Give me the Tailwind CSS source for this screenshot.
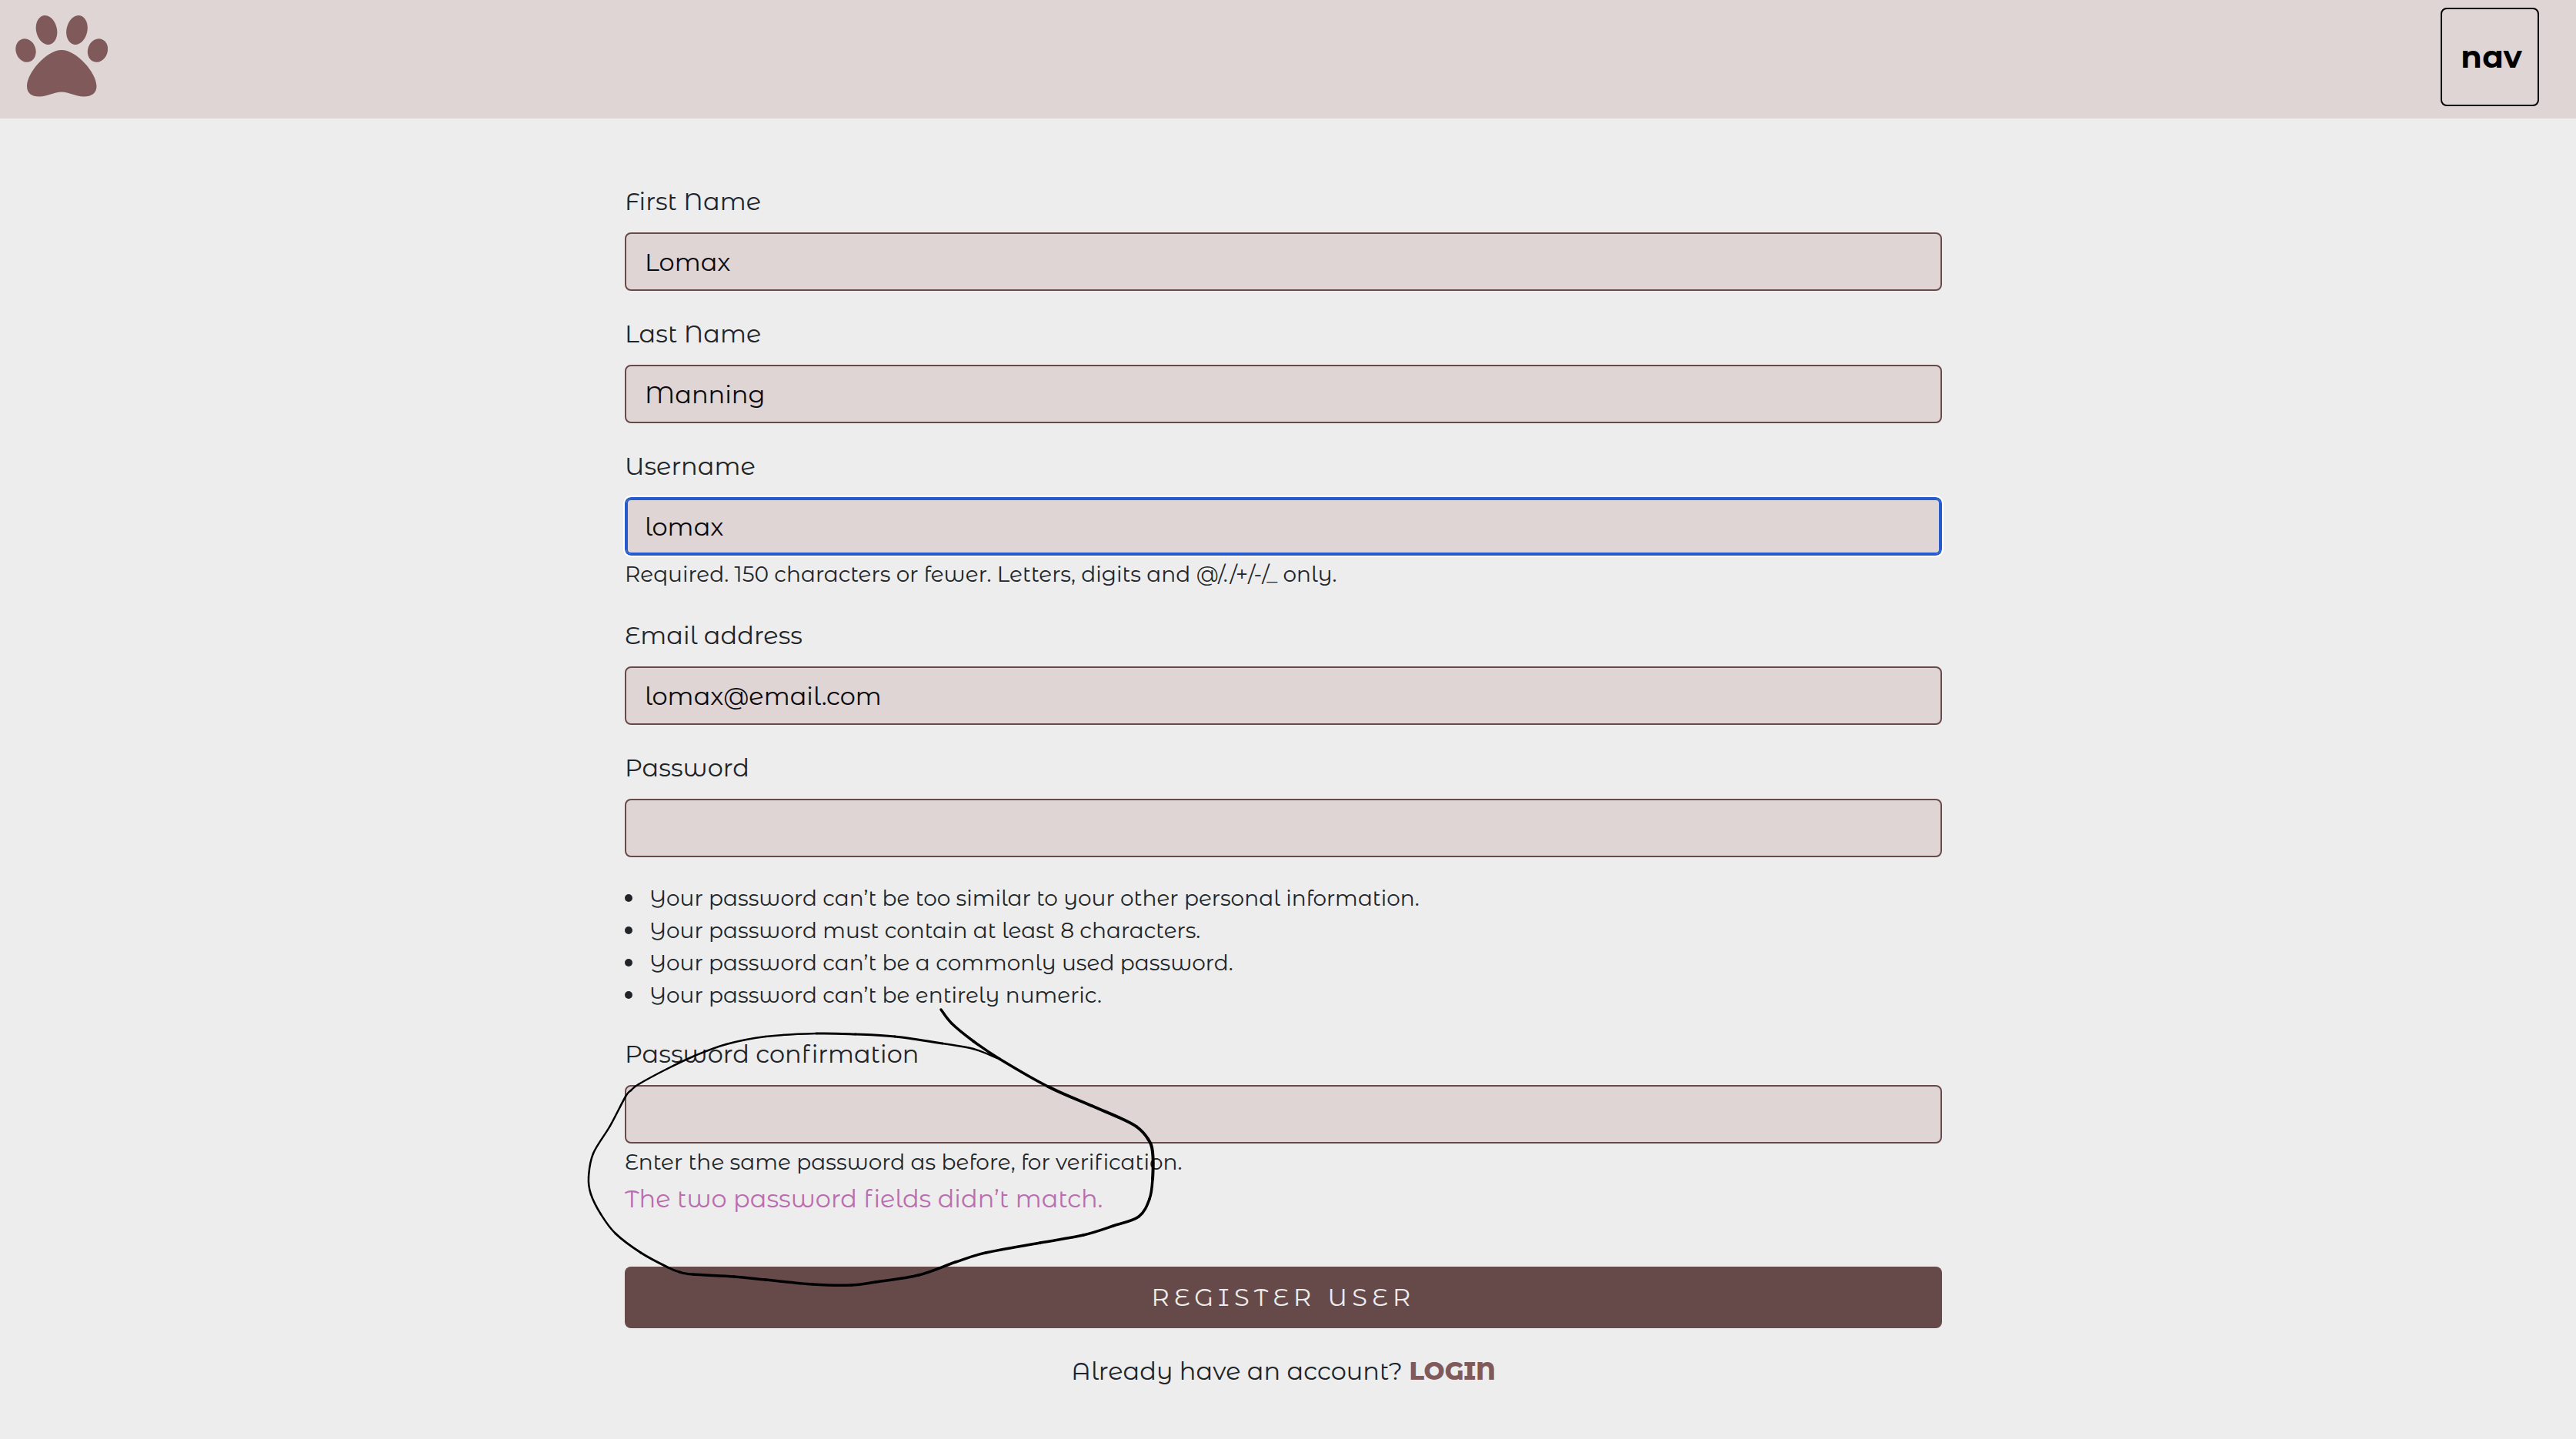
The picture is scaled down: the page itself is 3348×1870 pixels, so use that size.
<!DOCTYPE html>
<html lang="en">
<head>
<meta charset="utf-8">
<title>Register</title>
<script src="https://cdn.jsdelivr.net/npm/@tailwindcss/browser@4"></script>
</head>
<body class="min-h-screen bg-[#ededed] font-['Montserrat_Alternates','Inter',sans-serif] text-[32px] leading-[48px] text-[#212529]">
<header class="flex h-[154px] items-start justify-between bg-[#dfd5d4] pr-12 pl-5 pt-[10px]">
  <a href="#" aria-label="Home" class="pt-[10px]">
    <svg class="h-[106px] w-[120px] fill-[#805a5a]" viewBox="0 0 120 106" aria-hidden="true">
      <ellipse cx="13.500" cy="45.500" rx="12.800" ry="15.500" transform="rotate(-20 13.500 45.500)"/>
      <ellipse cx="40.500" cy="19" rx="13.500" ry="19.200" transform="rotate(-13 40.500 19)"/>
      <ellipse cx="80" cy="19" rx="13.500" ry="19.200" transform="rotate(13 80 19)"/>
      <ellipse cx="107" cy="45.500" rx="12.800" ry="15.500" transform="rotate(20 107 45.500)"/>
      <path d="M60 45C40 45 15 75 15 92C15 101 21 105.500 31 105.500C42 105.500 50 99.500 60 99.500S78 105.500 89 105.500C99 105.500 105.500 101 105.500 92C105.500 75 80 45 60 45Z"/>
    </svg>
  </a>
  <button type="button" class="size-32 rounded-lg border-2 border-black pl-1 text-[40px] font-bold text-black">nav</button>
</header>

<main class="pr-3">
  <form class="relative mx-auto mt-[84px] flex w-[51.32%] flex-col gap-8">
    <div class="flex flex-col gap-4">
      <label for="first">First Name</label>
      <input id="first" type="text" value="Lomax" class="h-[76px] rounded-lg border-2 border-[#684a4a] bg-[#dfd5d4] px-6 text-[#0a0a0f]">
    </div>
    <div class="flex flex-col gap-4">
      <label for="last">Last Name</label>
      <input id="last" type="text" value="Manning" class="h-[76px] rounded-lg border-2 border-[#684a4a] bg-[#dfd5d4] px-6 text-[#0a0a0f]">
    </div>
    <div>
      <div class="flex flex-col gap-4">
        <label for="user">Username</label>
        <input id="user" type="text" value="lomax" aria-describedby="user-help" class="h-[76px] rounded-lg border-2 border-[#265bcb] bg-[#dfd5d4] px-6 text-[#0a0a0f] inset-ring-2 inset-ring-[#265bcb] outline-2 outline-white">
      </div>
      <p id="user-help" class="mt-1 mb-1 text-[28px] leading-10">Required. 150 characters or fewer. Letters, digits and @/./+/-/_ only.</p>
    </div>
    <div class="flex flex-col gap-4">
      <label for="email">Email address</label>
      <input id="email" type="email" value="lomax@email.com" class="h-[76px] rounded-lg border-2 border-[#684a4a] bg-[#dfd5d4] px-6 text-[#0a0a0f]">
    </div>
    <div class="flex flex-col gap-4">
      <label for="pw">Password</label>
      <input id="pw" type="password" aria-describedby="pw-help" class="h-[76px] rounded-lg border-2 border-[#684a4a] bg-[#dfd5d4] px-6 text-[#0a0a0f]">
    </div>
    <ul id="pw-help" class="text-[28px] leading-[42px]">
      <li class="flex items-center gap-[22px] before:size-[10px] before:rounded-full before:bg-[#212529]">Your password can’t be too similar to your other personal information.</li>
      <li class="flex items-center gap-[22px] before:size-[10px] before:rounded-full before:bg-[#212529]">Your password must contain at least 8 characters.</li>
      <li class="flex items-center gap-[22px] before:size-[10px] before:rounded-full before:bg-[#212529]">Your password can’t be a commonly used password.</li>
      <li class="flex items-center gap-[22px] before:size-[10px] before:rounded-full before:bg-[#212529]">Your password can’t be entirely numeric.</li>
    </ul>
    <div>
      <div class="flex flex-col gap-4">
        <label for="pw2">Password confirmation</label>
        <input id="pw2" type="password" aria-describedby="pw2-help pw2-error" class="h-[76px] rounded-lg border-2 border-[#684a4a] bg-[#dfd5d4] px-6 text-[#0a0a0f]">
      </div>
      <p id="pw2-help" class="mt-1 mb-1 text-[28px] leading-10">Enter the same password as before, for verification.</p>
      <p id="pw2-error" class="text-[#ba6eb0]">The two password fields didn’t match.</p>
    </div>
    <button type="submit" class="mt-8 h-20 rounded-lg bg-[#664a4a] tracking-[0.2em] text-[#ededed]">REGISTER USER</button>
    <p class="text-center">Already have an account? <a href="#" class="font-extrabold text-[#805a5a]">LOGIN</a></p>

    <svg id="pen" class="pointer-events-none absolute top-0 left-0 size-px overflow-visible fill-none stroke-black" stroke-linecap="round" aria-hidden="true"></svg>
  </form>
</main>
<script>
// Hand-drawn loop around the confirmation error: x, y, pen width
const stroke = [
[411,1074,3.5],[425,1092,3.5],[453,1115,3.5],[487,1138,3.5],[550,1174,4],[607,1199,4],[642,1214,4],[665,1226,4],[680,1242,4],[686,1259,4],[686,1294,3.5],[682,1320,3.5],[668,1343,3.5],[635,1355,3.5],[596,1367,3.5],[540,1377,3.5],[469,1390,3.5],[430,1402,3.5],[382,1419,3.5],[326,1428,3.5],[295,1432,3.5],[244,1431,3.5],[183,1425,3.5],[142,1421,3.5],[88,1418,3],[71,1415,3],[56,1409,3],[21,1390,3],[-12,1365,2.5],[-31,1340,2.5],[-44,1314,2.5],[-47,1292,2.5],[-41,1261,2.5],[-19,1225,2.5],[1,1187,2.5],[8,1179,2.5],[18,1171,2.5],[55,1151,2.5],[91,1134,2.5],[132,1119,2.5],[183,1109,2.5],[249,1105,3],[300,1106,3],[351,1109,3],[413,1118,2.5],[453,1125,2.5],[484,1137,2]];
const pen = document.getElementById('pen');
for (let i = 0; i < stroke.length - 1; i++) {
  const a = stroke[Math.max(i - 1, 0)], b = stroke[i], c = stroke[i + 1], d = stroke[Math.min(i + 2, stroke.length - 1)];
  const p = document.createElementNS('http://www.w3.org/2000/svg', 'path');
  p.setAttribute('d', `M${b[0]} ${b[1]}C${b[0] + (c[0] - a[0]) / 6} ${b[1] + (c[1] - a[1]) / 6} ${c[0] - (d[0] - b[0]) / 6} ${c[1] - (d[1] - b[1]) / 6} ${c[0]} ${c[1]}`);
  p.setAttribute('stroke-width', b[2]);
  pen.append(p);
}
</script>
</body>
</html>
